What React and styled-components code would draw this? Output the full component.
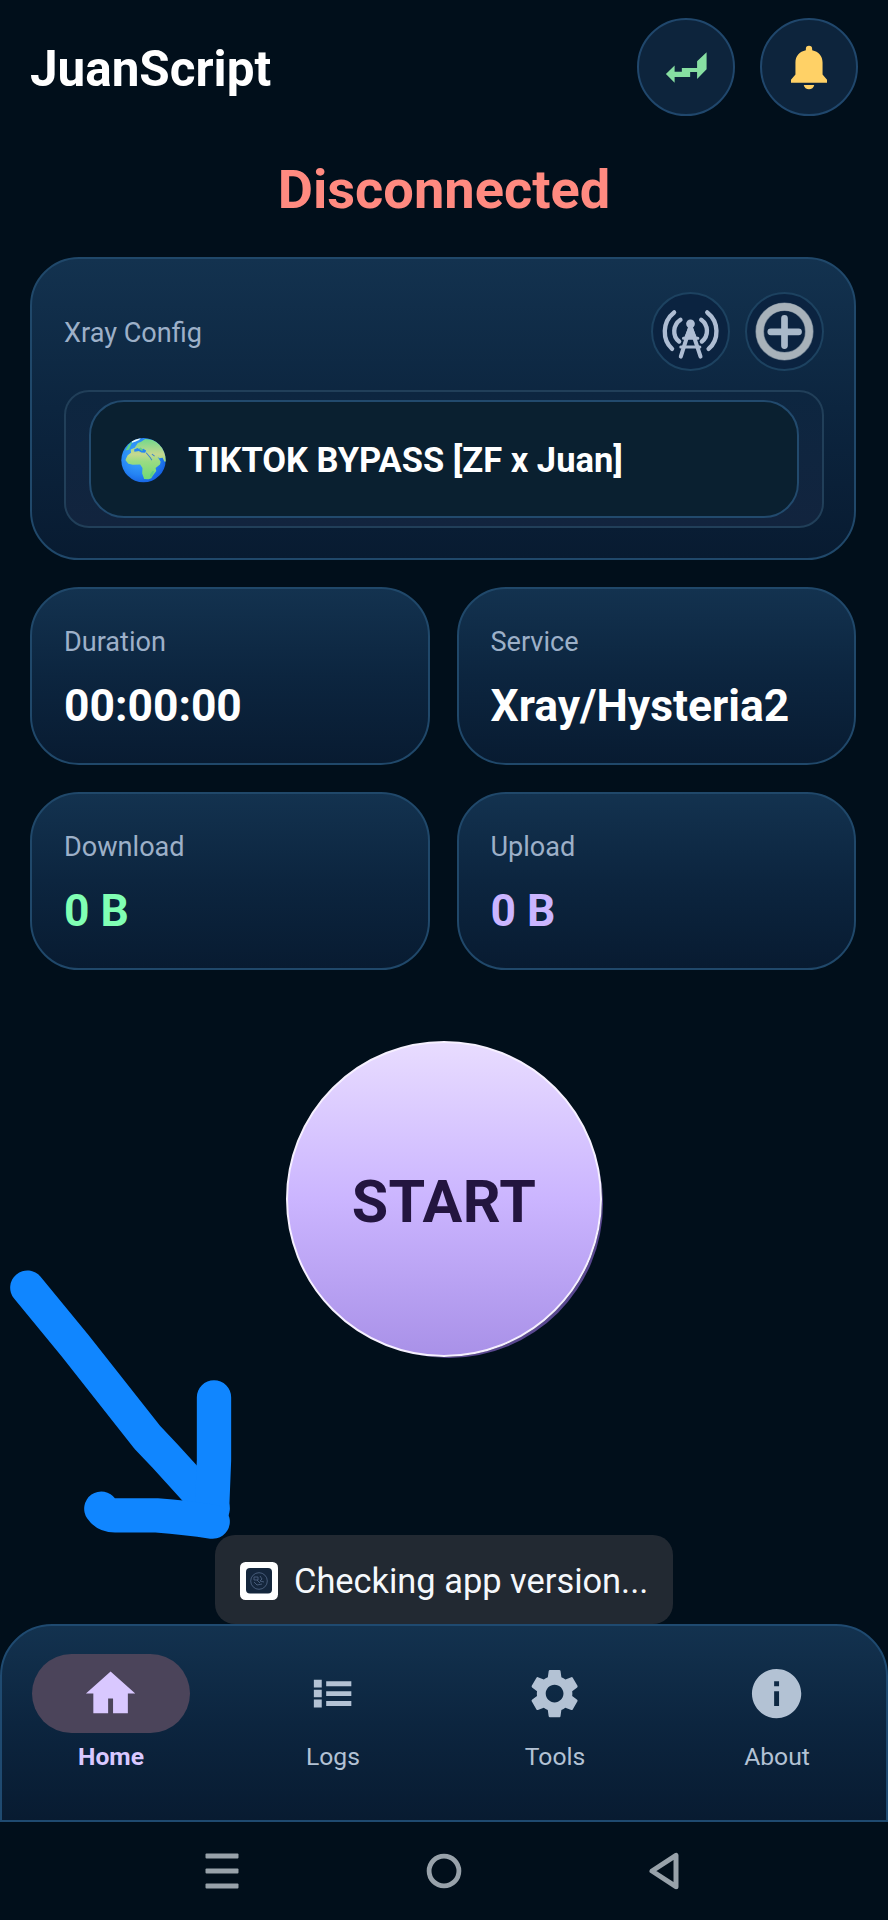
import React, { useState } from 'react';

import styled, { createGlobalStyle } from 'styled-components';
import { MdSettings, MdInfo } from 'react-icons/md';

const GlobalStyle = createGlobalStyle`
    * {
        box-sizing: border-box;
    }

    body {
        margin: 0;
        background: #010f1b;
        font-family: Roboto, 'Noto Sans', sans-serif;
    }

    button {
        border: none;
        background: none;
        padding: 0;
        margin: 0;
        font-family: inherit;
    }
`;

const Screen = styled.div`
    position: relative;
    display: flex;
    flex-direction: column;
    width: 888px;
    height: 1920px;
    overflow: hidden;
    background: #010f1b;
`;

const Header = styled.header`
    display: flex;
    align-items: center;
    gap: 25px;
    height: 99px;
    margin: 17px 30px 0;
`;

const AppTitle = styled.h1`
    flex: 1;
    margin: 0;
    padding-top: 4px;
    font-size: 49.4px;
    line-height: 58px;
    font-weight: 700;
    color: #fff;
`;

const RoundButton = styled.button`
    display: flex;
    align-items: center;
    justify-content: center;
    flex: none;
    width: ${props => props.$size}px;
    height: ${props => props.$size}px;
    border: 2px solid ${props => props.$edge || '#20476c'};
    border-radius: 50%;
    background: ${props => props.$fill || '#0d243c'};

    svg {
        flex: none;
        width: ${props => props.$size}px;
        height: ${props => props.$size}px;
    }
`;

const Status = styled.div`
    margin-top: 42px;
    font-size: 54.2px;
    line-height: 64px;
    font-weight: 700;
    text-align: center;
    color: #ff8a80;
`;

const Card = styled.section`
    border: 2px solid #20486a;
    border-radius: 49px;
    background: linear-gradient(#13324f, #0c253f 50%, #081b31);
`;

const ConfigCard = styled(Card)`
    height: 303px;
    margin: 35px 32px 0 30px;
    padding: 33px 30px 0 32px;
`;

const ConfigHeader = styled.div`
    display: flex;
    align-items: center;
    gap: 15px;
    height: 78px;
`;

const Label = styled.div`
    font-size: 27.1px;
    line-height: 32px;
    color: #9db0c8;
`;

const ConfigLabel = styled(Label)`
    flex: 1;
    padding-top: 3px;
`;

const Picker = styled.div`
    height: 138px;
    margin-top: 20px;
    padding: 8px 23px;
    border: 2px solid #213f59;
    border-radius: 25px;
    background: linear-gradient(#0d2640, #12243e);
`;

const PickerItem = styled.div`
    display: flex;
    align-items: center;
    gap: 22px;
    height: 118px;
    padding: 2px 0 0 30px;
    border: 2px solid #224a6d;
    border-radius: 35px;
    background: #0a2030;

    svg {
        flex: none;
        width: 45px;
        height: 45px;
    }
`;

const PickerText = styled.div`
    font-size: 34.5px;
    line-height: 40px;
    font-weight: 700;
    color: #fff;
    white-space: nowrap;
`;

const Stats = styled.div`
    display: grid;
    grid-template-columns: 1fr 1fr;
    gap: 27px;
    margin: 27px 32px 0 30px;
`;

const StatCard = styled(Card)`
    height: 178px;
    padding: 37px 32px 0;
`;

const StatValue = styled.div`
    margin-top: 22px;
    font-size: 44.4px;
    line-height: 52px;
    font-weight: 700;
    color: ${props => props.$color};
    white-space: nowrap;
`;

const StartButton = styled.button`
    align-self: center;
    width: 316px;
    height: 316px;
    margin-top: 71px;
    padding-top: 4px;
    border: 2px solid #f6f0ff;
    border-radius: 50%;
    background: linear-gradient(#e8dcff, #cbb5ff 50%, #a991e8);
    box-shadow: 5px 5px 0 -4px #5a4890;
    font-size: 59.2px;
    letter-spacing: .4px;
    font-weight: 700;
    color: #23153f;
`;

const BottomNav = styled.nav`
    display: grid;
    grid-template-columns: repeat(4, 222px);
    justify-content: center;
    height: 198px;
    margin-top: auto;
    padding-top: 28px;
    border: 2px solid #1f4a70;
    border-radius: 52px 52px 0 0;
    background: linear-gradient(#13324f, #0c253f 50%, #081b31);
`;

const NavItem = styled.button`
    display: flex;
    flex-direction: column;
    align-items: center;
    font-size: 24.66px;
    line-height: 30px;
    font-weight: ${props => props.$active ? 700 : 400};
    color: ${props => props.$active ? '#d9c8ff' : '#b3c2d4'};
`;

const NavPill = styled.span`
    display: flex;
    align-items: center;
    justify-content: center;
    width: 158px;
    height: 79px;
    margin-bottom: 9px;
    border-radius: 40px;
    background: ${props => props.$active ? '#4b445a' : 'transparent'};

    svg {
        width: 59.2px;
        height: 59.2px;
    }
`;

const SystemBar = styled.div`
    display: flex;
    height: 98px;
    padding: 0 111px 1px;
`;

const SystemKey = styled.div`
    display: flex;
    flex: 1;
    align-items: center;
    justify-content: center;

    svg {
        width: 48px;
        height: 48px;
    }
`;

const Toast = styled.div`
    position: absolute;
    left: 215px;
    top: 1535px;
    display: flex;
    align-items: center;
    gap: 16px;
    width: 458px;
    height: 89px;
    padding: 2px 0 0 25px;
    border-radius: 20px;
    background: #222932;
    font-size: 34.4px;
    line-height: 40px;
    color: #f5f8fc;
    white-space: nowrap;

    svg {
        flex: none;
        width: 38px;
        height: 38px;
    }
`;

const ArrowMark = styled.svg`
    position: absolute;
    left: 0;
    top: 1250px;
    width: 300px;
    height: 300px;
`;

const SwapIcon = () => (
    <svg viewBox='0 0 99 99'>
        <path fill='#87dfa2' d='M29.2 56.5 38 48v6.2h7.3v-3.7h15.4v-6.7L70.3 34.5v17.3L60.7 61.5v-6.9h-7v4.9H38v6z' />
    </svg>
);

const BellIcon = () => (
    <svg viewBox='0 0 99 99'>
        <path fill='#ffd166' d='M49.5 28a3.2 3.2 0 0 0-3.2 3.2v1.5C39.7 34 35.8 38.8 35.8 45v12L31.3 62.500v2.8h36.4v-2.8L63.2 57V45c0-6.2-3.9-11-10.5-12.3v-1.5A3.2 3.2 0 0 0 49.5 28z' />
        <path fill='#ffd166' d='M44.2 67.7h10.6c-.5 2.7-2.7 4.3-5.3 4.3s-4.8-1.6-5.3-4.3z' />
    </svg>
);

const AntennaIcon = () => (
    <svg viewBox='154 156 236 236' fill='none' stroke='#aebdd3' strokeLinecap='round'>
        <g strokeWidth='13'>
            <path d='M223 217C187 245 187 299 217 326' />
            <path d='M242 239C219 255 217 287 238 304' />
            <path d='M322 217C358 245 358 299 326 326' />
            <path d='M304 239C326 255 327 287 306 304' />
        </g>
        <circle cx='272' cy='251' r='13' fill='#aebdd3' stroke='none' />
        <path fill='#aebdd3' stroke='none' d='M267 258h10l14 34h-38z' />
        <path strokeWidth='12' d='M270 264 243 349M274 264 302 349' />
        <path strokeWidth='9' d='M251 294H294M243 320H300' />
    </svg>
);

const PlusIcon = () => (
    <svg viewBox='435 155 236 236' fill='none'>
        <circle cx='553' cy='273' r='74' stroke='#66788b' strokeWidth='26' />
        <circle cx='553' cy='273' r='74' stroke='#a8b2ba' strokeWidth='22' />
        <path stroke='#a9b9ca' strokeWidth='20' strokeLinecap='round' d='M512 274H595M553 234V315' />
    </svg>
);

const GlobeIcon = () => (
    <svg viewBox='362 597 134 134'>
        <defs>
            <radialGradient id='sea' cx='.4' cy='.4' r='.65'>
                <stop offset='0' stopColor='#41adff' />
                <stop offset='.65' stopColor='#2585f4' />
                <stop offset='1' stopColor='#1560e2' />
            </radialGradient>
            <linearGradient id='land' x2='0' y2='1'>
                <stop offset='0' stopColor='#72d98b' />
                <stop offset='.38' stopColor='#c6d88f' />
                <stop offset='.55' stopColor='#9bdc83' />
                <stop offset='1' stopColor='#70d976' />
            </linearGradient>
            <clipPath id='disc'><circle cx='429' cy='663' r='66' /></clipPath>
        </defs>
        <circle cx='429' cy='663' r='66' fill='url(#sea)' />
        <g clipPath='url(#disc)'>
            <path fill='url(#land)' d='M376 660l6-12 10-7-1-10 12-5 9-14 10-4 12-8 30 3 28 28 8 37-9-1-5-11-10 1-5-4 9 15-2 8-13 10 2 9-10 14-5 8-8 3-13-1-6-16 1-17-7-10-22 1-13-3-8-10z' />
            <path fill='#2585f4' d='M401 631l10-4 9 4 8-2 9 5-3 7-11-1-8-4-13 2z' />
            <path fill='#5fcf86' d='M415 628l6-3 7 8-4 3zM375 634l10-18 12-9-6 12-5 13zM449 705l6-9 6-1-7 17-6 1z' />
            <path fill='#e9f8fb' d='M394 606l12-7 15-2-5 6-12 5-9 3z' />
            <path fill='none' stroke='#3a84cf' strokeWidth='3' d='M437 641l12 14 5 8M454 645l8 6' />
        </g>
    </svg>
);

const HomeIcon = () => (
    <svg viewBox='0 0 24 24' fill='#d9c8ff'>
        <path d='M11 20v-6h2v6h6v-8h3L12 3 2 12h3v8z' />
    </svg>
);

const LogsIcon = () => (
    <svg viewBox='0 0 24 24' fill='#b3c2d4'>
        <path d='M4.4 6.4h3.2v3.1H4.4zM4.4 10.4h3.2v3.1H4.4zM4.4 14.4h3.2v3.2H4.4zM9.4 7h10.2v2H9.4zM9.4 11h10.2v2H9.4zM9.4 15h10.2v2H9.4z' />
    </svg>
);

const AppBadge = () => (
    <svg viewBox='0 0 38 38' fill='none'>
        <rect width='38' height='38' rx='5.5' fill='#fff' />
        <rect x='6' y='6' width='26' height='25.5' rx='4' fill='#14263c' />
        <g stroke='#4c6180' strokeWidth='.9'>
            <circle cx='19' cy='19' r='8.3' />
            <path d='M14 15h4v3h-4zM20 14l2 3-2 2 4 1M14 20l3 3 5-1M17 18l3 3' />
        </g>
    </svg>
);

const stats = [
    { label: 'Duration', value: '00:00:00', color: '#fff' },
    { label: 'Service', value: 'Xray/Hysteria2', color: '#fff' },
    { label: 'Download', value: '0 B', color: '#80ffb4' },
    { label: 'Upload', value: '0 B', color: '#cbb5ff' }
];

const tabs = [
    { name: 'Home', icon: <HomeIcon /> },
    { name: 'Logs', icon: <LogsIcon /> },
    { name: 'Tools', icon: <MdSettings /> },
    { name: 'About', icon: <MdInfo /> }
];

export default () => {
    const [tab, setTab] = useState('Home');

    return(
        <Screen>
            <GlobalStyle />
            <Header>
                <AppTitle>JuanScript</AppTitle>
                <RoundButton $size={98}><SwapIcon /></RoundButton>
                <RoundButton $size={98}><BellIcon /></RoundButton>
            </Header>
            <Status>Disconnected</Status>

            <ConfigCard>
                <ConfigHeader>
                    <ConfigLabel>Xray Config</ConfigLabel>
                    <RoundButton $size={79} $edge='#1d4260' $fill='#0b2340'><AntennaIcon /></RoundButton>
                    <RoundButton $size={79} $edge='#1d4260' $fill='#0b2340'><PlusIcon /></RoundButton>
                </ConfigHeader>
                <Picker>
                    <PickerItem>
                        <GlobeIcon />
                        <PickerText>TIKTOK BYPASS [ZF x Juan]</PickerText>
                    </PickerItem>
                </Picker>
            </ConfigCard>

            <Stats>
            {
                stats.map(stat =>
                    <StatCard key={stat.label}>
                        <Label>{stat.label}</Label>
                        <StatValue $color={stat.color}>{stat.value}</StatValue>
                    </StatCard>
                )
            }
            </Stats>

            <StartButton>START</StartButton>

            <BottomNav>
            {
                tabs.map(({ name, icon }) =>
                    <NavItem key={name} $active={tab === name} onClick={()=>setTab(name)}>
                        <NavPill $active={tab === name}>{icon}</NavPill>
                        {name}
                    </NavItem>
                )
            }
            </BottomNav>

            <SystemBar>
                <SystemKey>
                    <svg viewBox='0 0 48 48' fill='#98a2aa'>
                        <rect x='7.5' y='6.5' width='33' height='5' rx='1' />
                        <rect x='7.5' y='21.5' width='33' height='5' rx='1' />
                        <rect x='7.5' y='36.5' width='33' height='5' rx='1' />
                    </svg>
                </SystemKey>
                <SystemKey>
                    <svg viewBox='0 0 48 48' fill='none'>
                        <circle cx='24' cy='24' r='14.9' stroke='#98a2aa' strokeWidth='4.8' />
                    </svg>
                </SystemKey>
                <SystemKey>
                    <svg viewBox='0 0 48 48' fill='none'>
                        <path d='M10 24 34 8.3v31.4z' stroke='#98a2aa' strokeWidth='5' strokeLinejoin='round' />
                    </svg>
                </SystemKey>
            </SystemBar>

            <Toast>
                <AppBadge />
                Checking app version...
            </Toast>

            <ArrowMark viewBox='0 0 900 900' fill='none' stroke='#1086ff' strokeWidth='103' strokeLinecap='round' strokeLinejoin='round'>
                <path d='M82 113 225 287 442 562 495 618 638 775' />
                <path d='M642 442V630L636 780' />
                <path d='M304 776Q318 796 345 796H470Q560 803 638 815' />
            </ArrowMark>
        </Screen>
    )
}
